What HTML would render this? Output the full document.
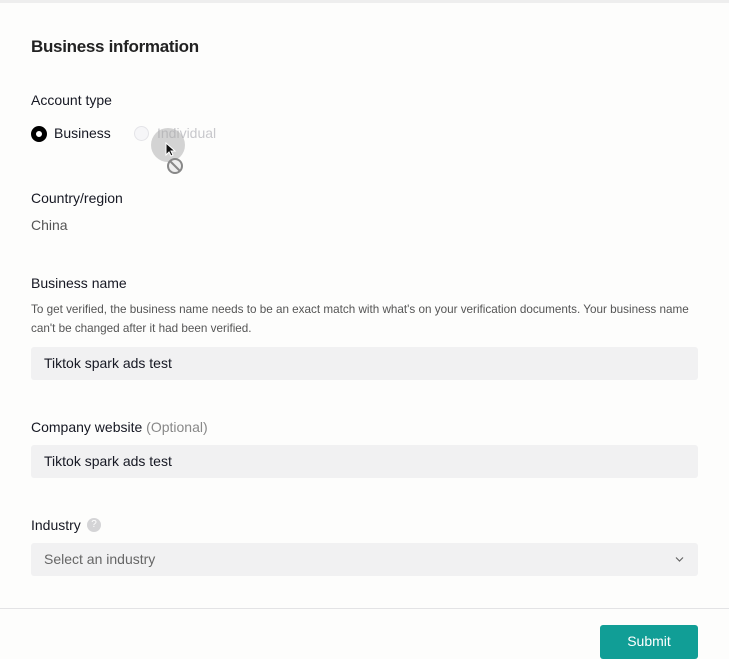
<!DOCTYPE html>
<html><head><meta charset="utf-8"><style>
*{margin:0;padding:0;box-sizing:border-box}
body{width:729px;height:657px;background:#fdfdfc;font-family:"Liberation Sans",sans-serif;color:#161823;position:relative;overflow:hidden}
.a{position:absolute;white-space:nowrap}
.box{position:absolute;left:31px;width:667px;height:33px;background:#f1f1f2;border-radius:3px;font-size:14px;padding:0 13px;line-height:33px}
</style></head><body>
<div class="a" style="left:0;top:0;width:729px;height:3px;background:#eeeeee"></div>
<div class="a" style="left:31px;top:37px;font-size:17px;font-weight:bold;letter-spacing:-0.3px;color:#222">Business information</div>
<div class="a" style="left:31px;top:92px;font-size:14px">Account type</div>
<div class="a" style="left:31px;top:126px;width:16px;height:16px;border-radius:50%;border:5px solid #000;background:#fff"></div>
<div class="a" style="left:54px;top:125px;font-size:14px">Business</div>
<div class="a" style="left:134px;top:126px;width:15px;height:15px;border-radius:50%;border:1px solid #e4e4e8;background:#f6f6f8"></div>
<div class="a" style="left:157px;top:125px;font-size:14px;color:#c8c8cc">Individual</div>
<div class="a" style="left:151px;top:128px;width:34px;height:34px;border-radius:50%;background:rgba(170,170,170,0.5)"></div>
<svg class="a" style="left:163px;top:142px" width="26" height="34" viewBox="0 0 26 34"><path d="M3 1v12l3-3 2 4 2-1-2-4h4z" fill="#111" stroke="#fff" stroke-width="1"/><circle cx="12" cy="24" r="7" fill="#eee" stroke="#888" stroke-width="2"/><path d="M7 19l10 10" stroke="#888" stroke-width="2"/></svg>
<div class="a" style="left:31px;top:190px;font-size:14px">Country/region</div>
<div class="a" style="left:31px;top:217px;font-size:14px;color:#555">China</div>
<div class="a" style="left:31px;top:275px;font-size:14px">Business name</div>
<div class="a" style="left:31px;top:300px;font-size:11.7px;color:#555;line-height:19px;white-space:normal;width:660px">To get verified, the business name needs to be an exact match with what's on your verification documents. Your business name can't be changed after it had been verified.</div>
<div class="box" style="top:347px">Tiktok spark ads test</div>
<div class="a" style="left:31px;top:419px;font-size:14px">Company website <span style="color:#888">(Optional)</span></div>
<div class="box" style="top:445px">Tiktok spark ads test</div>
<div class="a" style="left:31px;top:517px;font-size:14px">Industry</div>
<div class="a" style="left:87px;top:518px;width:14px;height:14px;border-radius:50%;background:#d4d4d6;color:#fff;font-size:10px;text-align:center;line-height:14px">?</div>
<div class="box" style="top:543px;color:#666">Select an industry
<svg style="position:absolute;right:14px;top:13px" width="9" height="7" viewBox="0 0 9 7"><path d="M1 1.5l3.5 3.5 3.5-3.5" fill="none" stroke="#666" stroke-width="1.2"/></svg></div>
<div class="a" style="left:0;top:608px;width:729px;height:1px;background:#e3e3e5"></div>
<div class="a" style="left:600px;top:625px;width:98px;height:34px;background:#119e96;border-radius:3px;color:#fff;font-size:14px;text-align:center;line-height:33px">Submit</div>
</body></html>
